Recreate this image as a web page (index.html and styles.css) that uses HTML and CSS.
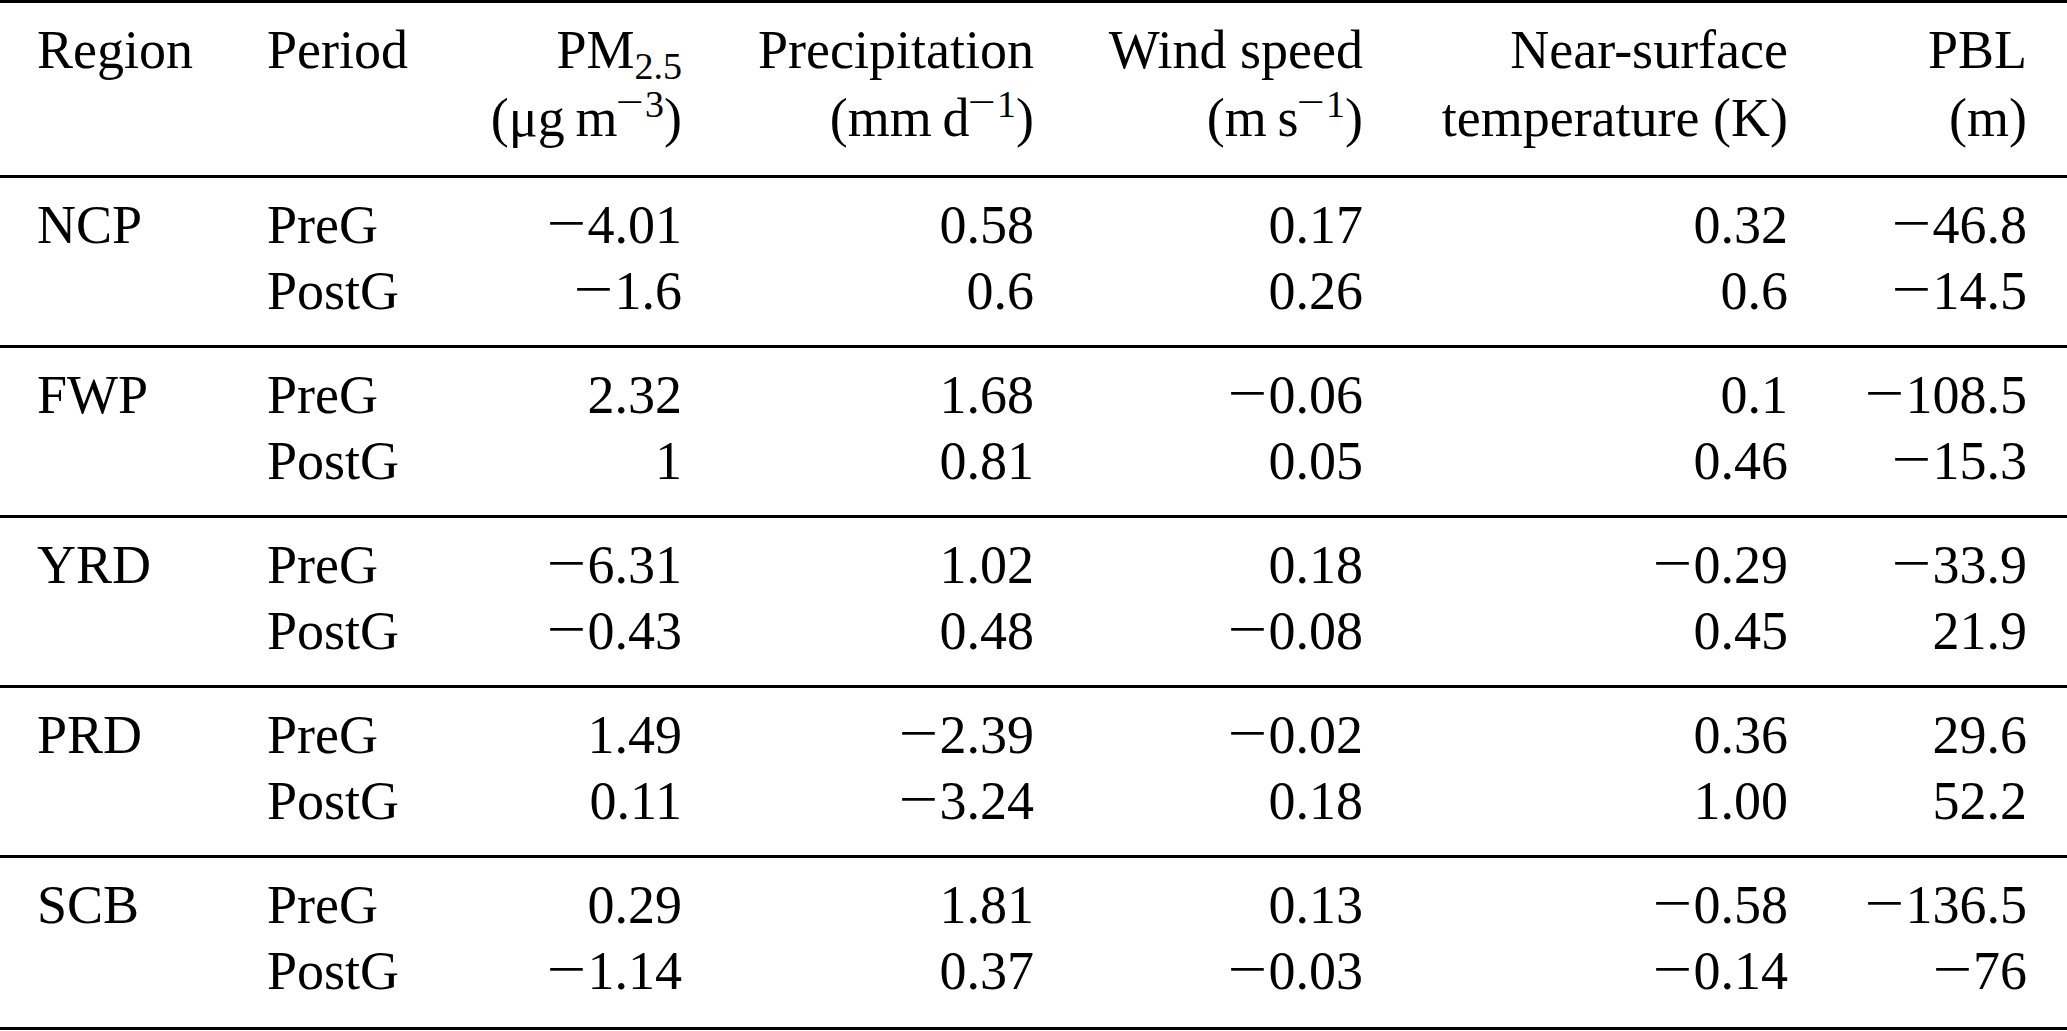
FILE: index.html
```html
<!DOCTYPE html>
<html lang="en">
<head>
<meta charset="utf-8">
<title>Regional changes table</title>
<link rel="stylesheet" href="styles.css">
</head>
<body>
<table class="data">
  <colgroup>
    <col class="c-region"><col class="c-period"><col class="c-pm"><col class="c-pr"><col class="c-ws"><col class="c-t"><col class="c-pbl">
  </colgroup>
  <thead>
    <tr>
      <th class="l first">Region</th>
      <th class="l">Period</th>
      <th class="r">PM<sub>2.5</sub><br>(μg&#8201;m<sup><span class="neg">&minus;</span>3</sup>)</th>
      <th class="r">Precipitation<br>(mm&#8201;d<sup><span class="neg">&minus;</span>1</sup>)</th>
      <th class="r">Wind speed<br>(m&#8201;s<sup><span class="neg">&minus;</span>1</sup>)</th>
      <th class="r">Near-surface<br>temperature (K)</th>
      <th class="r last">PBL<br>(m)</th>
    </tr>
  </thead>
  <tbody>
    <tr><td class="l first">NCP</td><td class="l">PreG</td><td class="r"><span class="neg">&minus;</span>4.01</td><td class="r">0.58</td><td class="r">0.17</td><td class="r">0.32</td><td class="r last"><span class="neg">&minus;</span>46.8</td></tr>
    <tr><td class="l first"></td><td class="l">PostG</td><td class="r"><span class="neg">&minus;</span>1.6</td><td class="r">0.6</td><td class="r">0.26</td><td class="r">0.6</td><td class="r last"><span class="neg">&minus;</span>14.5</td></tr>
  </tbody>
  <tbody>
    <tr><td class="l first">FWP</td><td class="l">PreG</td><td class="r">2.32</td><td class="r">1.68</td><td class="r"><span class="neg">&minus;</span>0.06</td><td class="r">0.1</td><td class="r last"><span class="neg">&minus;</span>108.5</td></tr>
    <tr><td class="l first"></td><td class="l">PostG</td><td class="r">1</td><td class="r">0.81</td><td class="r">0.05</td><td class="r">0.46</td><td class="r last"><span class="neg">&minus;</span>15.3</td></tr>
  </tbody>
  <tbody>
    <tr><td class="l first">YRD</td><td class="l">PreG</td><td class="r"><span class="neg">&minus;</span>6.31</td><td class="r">1.02</td><td class="r">0.18</td><td class="r"><span class="neg">&minus;</span>0.29</td><td class="r last"><span class="neg">&minus;</span>33.9</td></tr>
    <tr><td class="l first"></td><td class="l">PostG</td><td class="r"><span class="neg">&minus;</span>0.43</td><td class="r">0.48</td><td class="r"><span class="neg">&minus;</span>0.08</td><td class="r">0.45</td><td class="r last">21.9</td></tr>
  </tbody>
  <tbody>
    <tr><td class="l first">PRD</td><td class="l">PreG</td><td class="r">1.49</td><td class="r"><span class="neg">&minus;</span>2.39</td><td class="r"><span class="neg">&minus;</span>0.02</td><td class="r">0.36</td><td class="r last">29.6</td></tr>
    <tr><td class="l first"></td><td class="l">PostG</td><td class="r">0.11</td><td class="r"><span class="neg">&minus;</span>3.24</td><td class="r">0.18</td><td class="r">1.00</td><td class="r last">52.2</td></tr>
  </tbody>
  <tbody class="final">
    <tr><td class="l first">SCB</td><td class="l">PreG</td><td class="r">0.29</td><td class="r">1.81</td><td class="r">0.13</td><td class="r"><span class="neg">&minus;</span>0.58</td><td class="r last"><span class="neg">&minus;</span>136.5</td></tr>
    <tr><td class="l first"></td><td class="l">PostG</td><td class="r"><span class="neg">&minus;</span>1.14</td><td class="r">0.37</td><td class="r"><span class="neg">&minus;</span>0.03</td><td class="r"><span class="neg">&minus;</span>0.14</td><td class="r last"><span class="neg">&minus;</span>76</td></tr>
  </tbody>
</table>
</body>
</html>
```

FILE: styles.css
```css
html, body {
  margin: 0;
  padding: 0;
  background: #ffffff;
}

.data {
  width: 2067px;
  table-layout: fixed;
  border-collapse: separate;
  border-spacing: 0;
  font-family: "Liberation Serif", "Times New Roman", serif;
  font-size: 54px;
  line-height: 66px;
  color: #000000;
}

.c-region { width: 235px; }
.c-period { width: 195px; }
.c-pm { width: 284px; }
.c-pr { width: 352px; }
.c-ws { width: 329px; }
.c-t { width: 425px; }
.c-pbl { width: 247px; }

.data th,
.data td {
  padding: 0 32px;
  font-weight: normal;
  vertical-align: top;
  white-space: nowrap;
}

.data .l { text-align: left; }
.data .r { text-align: right; }
.data .first { padding-left: 37px; }
.data .last { padding-right: 40px; }

.data thead th {
  border-top: 3px solid #000;
  padding-top: 13px;
  padding-bottom: 23px;
  line-height: 68px;
}

.data tbody tr:first-child td {
  border-top: 3px solid #000;
  padding-top: 14px;
}

.data tbody tr:last-child td {
  padding-bottom: 21px;
}

.data tbody.final tr:last-child td {
  padding-bottom: 23px;
  border-bottom: 3px solid #000;
}

.data sub {
  font-size: 38px;
  line-height: 0;
  vertical-align: -11px;
}

.data sup {
  font-size: 38px;
  line-height: 0;
  vertical-align: 19px;
}

.neg {
  display: inline-block;
  line-height: 0;
  transform: translateY(-0.04em) scaleX(1.3);
  margin: 0 0.11em 0 0.05em;
}
```
